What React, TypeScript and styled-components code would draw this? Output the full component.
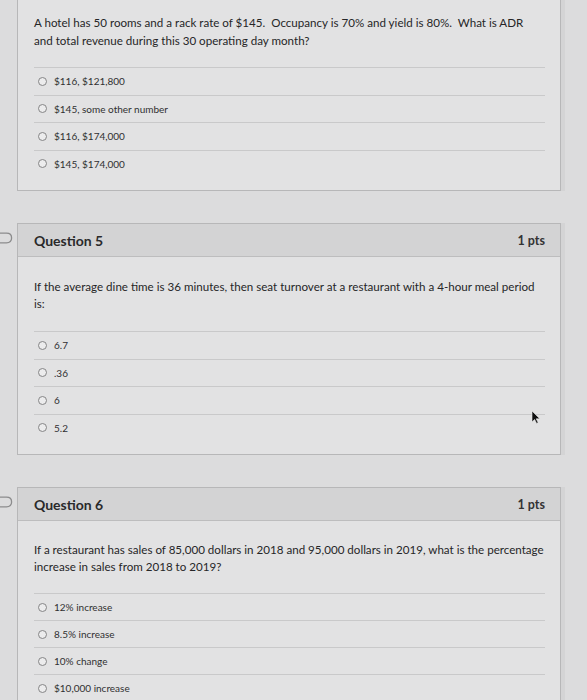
import React from 'react';
import styled, { createGlobalStyle } from 'styled-components';

const GlobalStyle = createGlobalStyle`
  html, body {
    margin: 0;
    padding: 0;
    overflow: hidden;
  }
  body {
    background: #dcdcdd;
    font-family: Lato, 'Open Sans', sans-serif;
    color: #2f2f30;
  }
`;

const Page = styled.div`
  display: flex;
  flex-direction: column;
  gap: 32px;
  width: 561px;
`;

const QuestionRow = styled.div`
  display: flex;
  align-items: flex-start;
`;

const Gutter = styled.div`
  width: 17px;
  flex: none;
  padding-top: 9px;
  display: flex;
`;

const Card = styled.div<{ $open?: boolean }>`
  position: relative;
  flex: 1;
  background: #e2e2e3;
  border: 1px solid #b7b7b8;
  border-top-width: ${(p) => (p.$open ? 0 : 1)}px;
  box-shadow: 4px 0 0 #d4d4d5;
`;

const Header = styled.div`
  height: 32px;
  display: flex;
  align-items: center;
  justify-content: space-between;
  padding: 0 15px 0 16px;
  background: #d3d3d4;
  border-bottom: 1px solid #bdbdbe;
`;

const Title = styled.h3`
  margin: 0;
  font-size: 14px;
  font-weight: 700;
  color: #2a2a2b;
`;

const Points = styled.span`
  font-size: 12.5px;
  font-weight: 700;
  color: #333334;
`;

const Body = styled.div<{ $top: number }>`
  padding: ${(p) => p.$top}px 15px 13px 16px;
`;

const QuestionText = styled.p<{ $gap: number; $lh: number }>`
  margin: 0 -4px ${(p) => p.$gap}px 0;
  font-size: 11.6px;
  line-height: ${(p) => p.$lh}px;
  white-space: pre-wrap;
  color: #262627;
`;

const AnswerList = styled.div`
  display: flex;
  flex-direction: column;
`;

const Answer = styled.label<{ $h: number }>`
  height: ${(p) => p.$h}px;
  display: flex;
  align-items: center;
  gap: 7px;
  padding-left: 4px;
  border-top: 1px solid #c9c9ca;
  font-size: 10px;
  color: #303031;
`;

const Radio = styled.span`
  width: 7px;
  height: 7px;
  border-radius: 50%;
  border: 1px solid #858586;
  background: #ececed;
  flex: none;
`;

const Cursor = styled.svg`
  position: absolute;
  left: 513px;
  top: 186px;
`;

const Flag = () => (
  <svg width="13" height="12" viewBox="0 0 13 12">
    <path
      d="M-2 1.2 H6.5 Q11.6 1.2 11.6 6 Q11.6 10.8 6.5 10.8 H-2"
      fill="none"
      stroke="#8c8c8d"
      strokeWidth="1.3"
    />
  </svg>
);

type Question = {
  title?: string;
  text: string;
  answers: string[];
  top: number;
  gap: number;
  lh: number;
  row: number;
  cursor?: boolean;
};

const questions: Question[] = [
  {
    text: 'A hotel has 50 rooms and a rack rate of $145.  Occupancy is 70% and yield is 80%.  What is ADR\nand total revenue during this 30 operating day month?',
    answers: ['$116, $121,800', '$145, some other number', '$116, $174,000', '$145, $174,000'],
    top: 14,
    gap: 17,
    lh: 18,
    row: 26.5,
  },
  {
    title: 'Question 5',
    text: 'If the average dine time is 36 minutes, then seat turnover at a restaurant with a 4-hour meal period\nis:',
    answers: ['6.7', '.36', '6', '5.2'],
    top: 22,
    gap: 19,
    lh: 16.5,
    row: 26.5,
    cursor: true,
  },
  {
    title: 'Question 6',
    text: 'If a restaurant has sales of 85,000 dollars in 2018 and 95,000 dollars in 2019, what is the percentage\nincrease in sales from 2018 to 2019?',
    answers: ['12% increase', '8.5% increase', '10% change', '$10,000 increase'],
    top: 20,
    gap: 18,
    lh: 17,
    row: 26,
  },
];

export default function App() {
  return (
    <>
      <GlobalStyle />
      <Page>
        {questions.map((q, i) => (
          <QuestionRow key={i}>
            <Gutter>{q.title && <Flag />}</Gutter>
            <Card $open={!q.title}>
              {q.title && (
                <Header>
                  <Title>{q.title}</Title>
                  <Points>1 pts</Points>
                </Header>
              )}
              <Body $top={q.top}>
                <QuestionText $gap={q.gap} $lh={q.lh}>
                  {q.text}
                </QuestionText>
                <AnswerList>
                  {q.answers.map((a) => (
                    <Answer key={a} $h={q.row}>
                      <Radio />
                      {a}
                    </Answer>
                  ))}
                </AnswerList>
              </Body>
              {q.cursor && (
                <Cursor width="10" height="14" viewBox="0 0 10 14">
                  <path d="M1 1 L1 12 L3.6 9.4 L5.6 13.4 L7.2 12.6 L5.2 8.8 L8.8 8.8 Z" fill="#111" stroke="#eee" strokeWidth="0.6" />
                </Cursor>
              )}
            </Card>
          </QuestionRow>
        ))}
      </Page>
    </>
  );
}
